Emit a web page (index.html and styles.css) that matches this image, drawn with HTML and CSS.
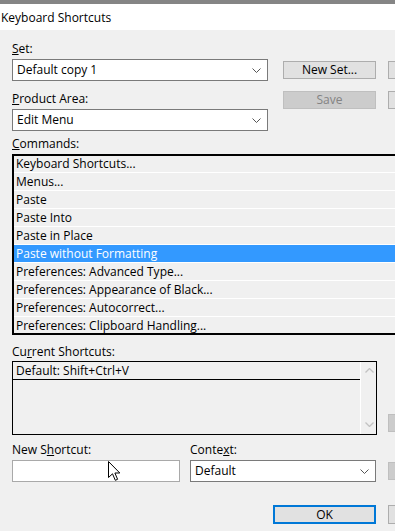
FILE: index.html
```html
<!DOCTYPE html>
<html>
<head>
<meta charset="utf-8">
<link rel="stylesheet" href="styles.css">
</head>
<body>
<div class="window">
  <div class="topbar"></div>
  <div class="titlebar">Keyboard Shortcuts</div>
  <div class="content">
    <div class="top-grid">
      <div class="label l-set"><u>S</u>et:</div>
      <div class="select s-set"><span>Default copy 1</span><svg class="chev" width="9" height="5" viewBox="0 0 9 5"><polyline points="0.5,0.5 4.5,4.5 8.5,0.5" fill="none" stroke="#555" stroke-width="1"/></svg></div>
      <div class="btn b-newset">New Set...</div>
      <div class="btn stub b-stub1"></div>
      <div class="label l-area"><u>P</u>roduct Area:</div>
      <div class="btn disabled b-save">Save</div>
      <div class="btn stub b-stub2"></div>
      <div class="select s-area"><span>Edit Menu</span><svg class="chev" width="9" height="5" viewBox="0 0 9 5"><polyline points="0.5,0.5 4.5,4.5 8.5,0.5" fill="none" stroke="#555" stroke-width="1"/></svg></div>
    </div>

    <div class="label l-cmd"><u>C</u>ommands:</div>
    <div class="cmdlist">
      <div class="cmdinner">
        <div class="item first">Keyboard Shortcuts...</div>
        <div class="item">Menus...</div>
        <div class="item">Paste</div>
        <div class="item">Paste Into</div>
        <div class="item">Paste in Place</div>
        <div class="item selected">Paste without Formatting</div>
        <div class="item">Preferences: Advanced Type...</div>
        <div class="item">Preferences: Appearance of Black...</div>
        <div class="item">Preferences: Autocorrect...</div>
        <div class="item">Preferences: Clipboard Handling...</div>
      </div>
    </div>

    <div class="label l-cur">Cu<u>r</u>rent Shortcuts:</div>
    <div class="cur-row">
      <div class="curbox">
        <div class="curlist">
          <div class="curitem">Default: Shift+Ctrl+V</div>
        </div>
        <div class="scrollbar">
          <svg width="9" height="5" viewBox="0 0 9 5"><polyline points="0.5,4.5 4.5,0.5 8.5,4.5" fill="none" stroke="#c2c2c2" stroke-width="1.3"/></svg>
          <svg width="9" height="5" viewBox="0 0 9 5"><polyline points="0.5,0.5 4.5,4.5 8.5,0.5" fill="none" stroke="#c2c2c2" stroke-width="1.3"/></svg>
        </div>
      </div>
      <div class="btn stub disabled b-stub3"></div>
    </div>

    <div class="new-row">
      <div class="field f-new">
        <div class="label">New S<u>h</u>ortcut:</div>
        <div class="input"></div>
      </div>
      <div class="field f-ctx">
        <div class="label">Conte<u>x</u>t:</div>
        <div class="select s-ctx"><span>Default</span><svg class="chev" width="9" height="5" viewBox="0 0 9 5"><polyline points="0.5,0.5 4.5,4.5 8.5,0.5" fill="none" stroke="#555" stroke-width="1"/></svg></div>
      </div>
      <div class="btn stub disabled b-stub4"></div>
    </div>

    <div class="ok-row">
      <div class="btn ok">OK</div>
      <div class="btn stub b-stub5"></div>
    </div>
  </div>

  <svg class="cursor" width="13" height="21" viewBox="0 0 13 21">
    <path d="M0.5,0.5 L0.5,16.5 L4.5,12.8 L7.3,19.3 L9.6,18.3 L6.9,12 L11.8,12 Z" fill="#fff" stroke="#000" stroke-width="1" stroke-linejoin="miter"/>
  </svg>
</div>
</body>
</html>
```

FILE: styles.css
```css
html, body {
  margin: 0;
  padding: 0;
  background: #f0f0f0;
  overflow: hidden;
}

.window {
  position: relative;
  width: 395px;
  height: 531px;
  overflow: hidden;
  font-family: "Open Sans", "Noto Sans", sans-serif;
  font-size: 12px;
  line-height: 15px;
  color: #000;
}

.topbar {
  height: 4px;
  background: #858585;
}

.titlebar {
  height: 26px;
  line-height: 26px;
  background: #ffffff;
  padding-left: 1px;
  box-sizing: border-box;
  padding-top: 1px;
}

.content {
  padding: 11px 0 0 12px;
}

u {
  text-decoration: underline;
  text-underline-offset: 1px;
}

.label {
  height: 15px;
  white-space: nowrap;
}

/* top grid */
.top-grid {
  display: grid;
  grid-template-columns: 256px 108px 105px;
  grid-template-rows: 18px 22px 28px 22px;
}

.l-set { grid-column: 1; grid-row: 1; }
.s-set { grid-column: 1; grid-row: 2; }
.b-newset { grid-column: 2; grid-row: 2; align-self: center; justify-self: end; }
.b-stub1 { grid-column: 3; grid-row: 2; align-self: center; justify-self: end; }
.l-area { grid-column: 1; grid-row: 3; align-self: end; margin-bottom: 3px; }
.b-save { grid-column: 2; grid-row: 3; align-self: end; justify-self: end; }
.b-stub2 { grid-column: 3; grid-row: 3; align-self: end; justify-self: end; }
.s-area { grid-column: 1; grid-row: 4; }

.select {
  box-sizing: border-box;
  height: 22px;
  border: 1px solid #7a7a7a;
  background: #fff;
  display: flex;
  align-items: center;
  justify-content: space-between;
  padding: 0 6px 0 4px;
}

.select span {
  line-height: 15px;
  padding-bottom: 1px;
}

.chev {
  display: block;
}

.btn {
  box-sizing: border-box;
  width: 93px;
  height: 18px;
  border: 1px solid #adadad;
  background: #e1e1e1;
  text-align: center;
  line-height: 15px;
  flex-shrink: 0;
}

.btn.disabled {
  background: #cccccc;
  border-color: #bfbfbf;
  color: #838383;
}

/* commands */
.l-cmd {
  margin-top: 5px;
  margin-bottom: 3px;
}

.cmdlist {
  box-sizing: border-box;
  width: 500px;
  border: 2px solid #000;
  height: 181px;
  overflow: hidden;
}

.cmdinner {
  height: 177px;
  overflow: hidden;
}

.item {
  height: 17px;
  line-height: 17px;
  border-bottom: 1px solid #ffffff;
  padding-left: 2px;
  white-space: nowrap;
  background: #f0f0f0;
}

.item.first {
  margin-top: -1px;
}

.item.selected {
  background: #3399ff;
  color: #fff;
}

/* current shortcuts */
.l-cur {
  margin-top: 9px;
  margin-bottom: 2px;
}

.cur-row {
  display: flex;
  align-items: flex-end;
  gap: 11px;
}

.curbox {
  box-sizing: border-box;
  width: 365px;
  height: 74px;
  border: 1px solid #000;
  display: flex;
  flex-shrink: 0;
}

.curlist {
  flex: 1;
}

.curitem {
  height: 16px;
  line-height: 15px;
  padding: 1px 0 0 3px;
  border-bottom: 1px solid #000;
}

.scrollbar {
  box-sizing: border-box;
  width: 16px;
  border-left: 1px solid #fff;
  display: flex;
  flex-direction: column;
  align-items: center;
  justify-content: space-between;
  padding: 6px 0 7px 1px;
}

.scrollbar svg {
  display: block;
}

.b-stub3 {
  margin-bottom: 3px;
}

/* new shortcut row */
.new-row {
  display: flex;
  align-items: flex-end;
  margin-top: 7px;
}

.field {
  flex-shrink: 0;
}

.field .label {
  margin-bottom: 3px;
}

.f-new {
  width: 168px;
  margin-right: 10px;
}

.input {
  box-sizing: border-box;
  height: 22px;
  border: 1px solid #a9a9a9;
  background: #fff;
}

.f-ctx {
  width: 186px;
  margin-right: 12px;
}

.b-stub4 {
  margin-bottom: 2px;
}

/* ok row */
.ok-row {
  display: flex;
  margin-top: 23px;
  padding-left: 261px;
  gap: 12px;
}

.btn.ok {
  width: 103px;
  height: 19px;
  border: 2px solid #0078d7;
  line-height: 15px;
}

.btn.stub {
  width: 93px;
}

.b-stub5 {
  height: 19px;
}

.cursor {
  position: absolute;
  left: 108px;
  top: 461px;
}
```
